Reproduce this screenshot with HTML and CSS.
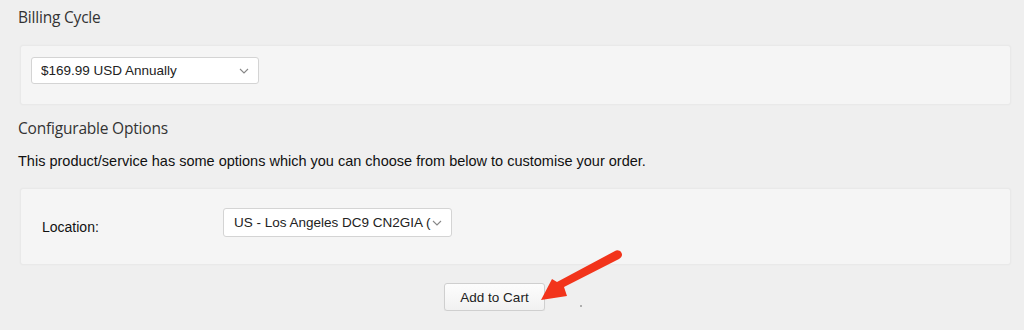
FILE: index.html
```html
<!DOCTYPE html>
<html lang="en">
<head>
    <meta charset="UTF-8">
    <title>Configure</title>
    <link rel="stylesheet" href="styles.css">
</head>
<body>

<div class="page">
    <h3 class="section-title">Billing Cycle</h3>
    <div class="field-box billing">
        <select class="select-sm billing-select">
            <option>$169.99 USD Annually</option>
        </select>
    </div>

    <h3 class="section-title options-title">Configurable Options</h3>
    <p class="intro">This product/service has some options which you can choose from below to customise your order.</p>

    <div class="field-box options">
        <label class="opt-label" for="location">Location:</label>
        <select id="location" class="select-sm location-select">
            <option>US - Los Angeles DC9 CN2GIA (</option>
        </select>
    </div>

    <div class="actions">
        <button class="btn-cart">Add to Cart</button>
    </div>
</div>

<svg class="pointer" width="100" height="60" viewBox="0 0 100 60">
    <path d="M90 4 C 92 7, 91 9, 88 11 L 33 39 L 36 48 L 10 52 L 21 31 L 26 34 L 84 3 C 86 1.5, 89 2.5, 90 4 Z" fill="#f2341b"/>
</svg>
<span class="speck"></span>

</body>
</html>
```

FILE: styles.css
```css
body {
    margin: 0;
    background: #efefef;
    font-family: "Liberation Sans", Arial, sans-serif;
    color: #222;
}
.page {
    padding: 5px 13px 0 18px;
}
.section-title {
    margin: 0;
    font-family: "Open Sans", sans-serif;
    font-weight: 400;
    font-size: 15.5px;
    line-height: 24px;
    color: #333;
    letter-spacing: -0.2px;
}
.field-box {
    margin-left: 2px;
    background: #f5f5f5;
    border: 1px solid #e9e9e9;
    border-radius: 3px;
    box-shadow: 0 0 2px rgba(0,0,0,0.04);
}
.billing {
    margin-top: 16px;
    height: 60px;
    padding: 11px 0 0 10px;
    box-sizing: border-box;
}
.select-sm {
    appearance: none;
    height: 27px;
    background: #fff url("data:image/svg+xml,%3Csvg xmlns='http://www.w3.org/2000/svg' width='10' height='6'%3E%3Cpath d='M1 1l4 4 4-4' fill='none' stroke='%23888' stroke-width='1.1'/%3E%3C/svg%3E") no-repeat right 9px center;
    border: 1px solid #d4d4d4;
    border-radius: 3px;
    font-family: "Liberation Sans", Arial, sans-serif;
    font-size: 13.5px;
    color: #222;
    padding: 0 24px 0 9px;
}
.billing-select {
    width: 228px;
}
.options-title {
    margin-top: 11px;
}
.intro {
    margin: 11px 0 0;
    font-size: 14.5px;
    line-height: 20px;
    color: #111;
}
.options {
    margin-top: 17px;
    height: 77px;
    box-sizing: border-box;
    display: flex;
    align-items: flex-start;
    padding: 19px 0 0 21px;
}
.opt-label {
    width: 181px;
    font-size: 14px;
    line-height: 20px;
    margin-top: 9px;
    color: #111;
}
.location-select {
    width: 229px;
    height: 29px;
    font-size: 13.5px;
    padding: 0 20px 0 10px;
    text-overflow: clip;
}
.actions {
    display: flex;
    justify-content: center;
    padding-right: 40px;
    margin-top: 18px;
}
.btn-cart {
    width: 101px;
    height: 28px;
    background: linear-gradient(#fdfdfd, #f1f1f1);
    border: 1px solid #cfcfcf;
    border-radius: 3px;
    font-family: "Liberation Sans", Arial, sans-serif;
    font-size: 13.5px;
    color: #222;
    box-shadow: 0 1px 1px rgba(0,0,0,0.06);
}
.pointer {
    position: absolute;
    left: 531px;
    top: 248px;
}
.speck {
    position: absolute;
    left: 580px;
    top: 305px;
    width: 2px;
    height: 2px;
    background: #999;
    border-radius: 50%;
}
```
